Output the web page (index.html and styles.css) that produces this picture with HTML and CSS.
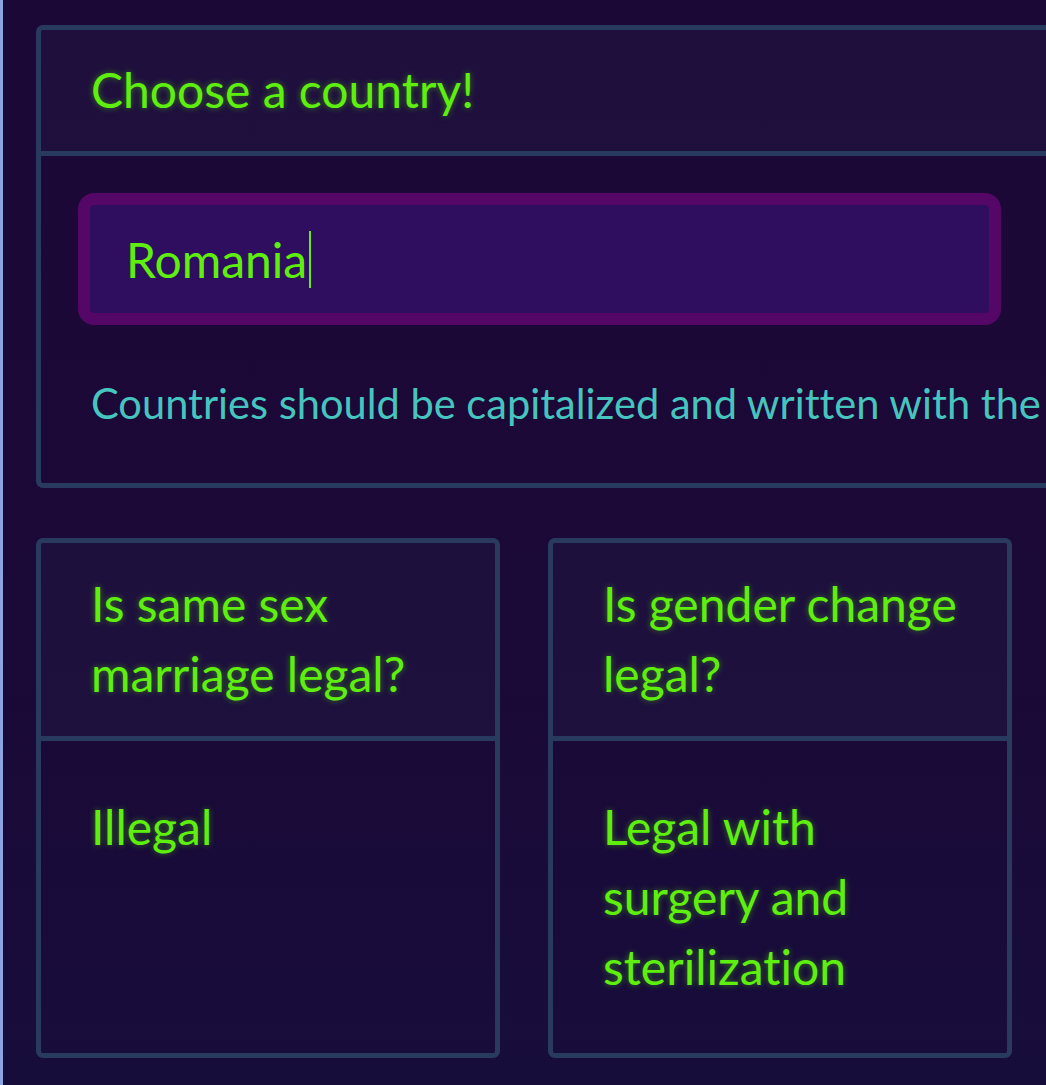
FILE: index.html
```html
<!DOCTYPE html>
<html lang="en">
<head>
<meta charset="utf-8">
<title>Choose a country</title>
<link rel="stylesheet" href="styles.css">
</head>
<body>
<main class="page">
  <section class="card card-wide">
    <header class="card-head">
      <h1 class="title">Choose a country!</h1>
    </header>
    <div class="card-body country-body">
      <div class="field"><span class="field-text">Romania</span><span class="caret"></span></div>
      <p class="hint">Countries should be capitalized and written with the</p>
    </div>
  </section>
  <div class="answers">
    <section class="card">
      <header class="card-head">
        <h2 class="title">Is same sex marriage legal?</h2>
      </header>
      <div class="card-body">
        <p class="answer">Illegal</p>
      </div>
    </section>
    <section class="card">
      <header class="card-head">
        <h2 class="title">Is gender change legal?</h2>
      </header>
      <div class="card-body">
        <p class="answer">Legal with surgery and sterilization</p>
      </div>
    </section>
  </div>
</main>
</body>
</html>
```

FILE: styles.css
```css
html {
  overflow-x: hidden;
}
body {
  margin: 0;
  min-height: 1085px;
  font-family: Lato, "Open Sans", sans-serif;
  font-variant-ligatures: none;
  background: linear-gradient(to bottom, #1c0836 0%, #1b0937 60%, #170d3b 100%);
  border-left: 3px solid #8ca4e2;
  overflow-x: hidden;
}
.page {
  padding: 25px 0 0 33px;
  display: flex;
  flex-direction: column;
  gap: 50px;
}
.card {
  border: 5px solid #283a5e;
  border-radius: 7px;
  box-sizing: border-box;
}
.card-wide {
  width: 1200px;
}
.card-head {
  background: rgba(40, 36, 80, 0.28);
  border-bottom: 5px solid #283a5e;
  padding: 25px 50px 26px 50px;
}
.answers .card-head {
  padding: 26px 50px 27px 50px;
}
.title {
  margin: 0;
  font-size: 48px;
  line-height: 70px;
  font-weight: 400;
  color: #5fef0f;
  text-shadow: 0 0 6px rgba(95, 239, 15, 0.45);
}
.card-body {
  padding: 51px 50px 51px 50px;
}
.country-body {
  padding: 37px 37px 51px 37px;
}
.field {
  width: 923px;
  height: 132px;
  box-sizing: border-box;
  border: 12px solid #550768;
  border-radius: 16px;
  background: #300e5f;
  padding: 0 36px;
  display: flex;
  align-items: center;
  font-size: 48px;
  color: #5fef0f;
}
.caret {
  display: inline-block;
  width: 2px;
  height: 57px;
  background: #5fef0f;
  margin-left: 2px;
}
.hint {
  margin: 49px 0 0 13px;
  font-size: 41.6px;
  line-height: 58px;
  color: #46c4be;
  white-space: nowrap;
}
.answers {
  display: grid;
  grid-template-columns: 464px 464px;
  gap: 48px;
}
.answer {
  margin: 0;
  font-size: 48px;
  line-height: 70px;
  color: #5fef0f;
  text-shadow: 0 0 6px rgba(95, 239, 15, 0.45);
}
```
